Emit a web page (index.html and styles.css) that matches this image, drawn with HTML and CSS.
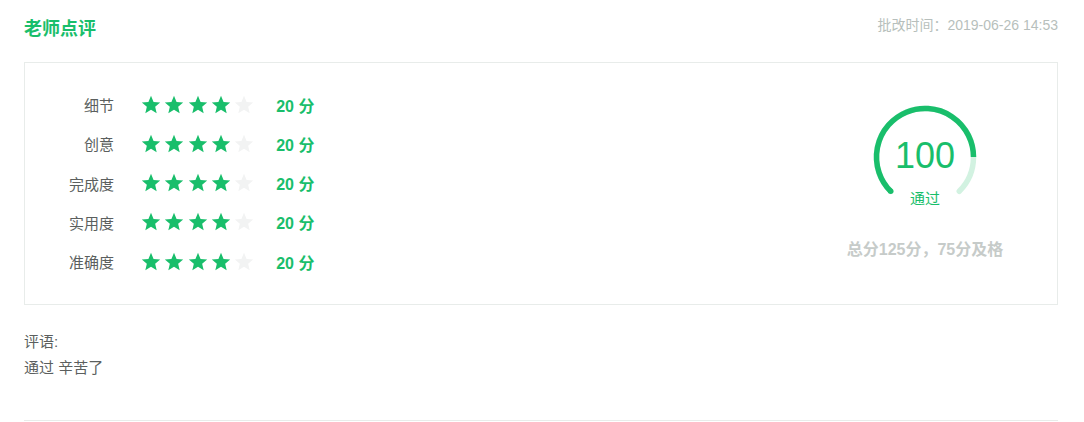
FILE: index.html
```html
<!DOCTYPE html>
<html lang="zh-CN">
<head>
<meta charset="utf-8">
<title>老师点评</title>
<link rel="stylesheet" href="styles.css">
</head>
<body>
<div class="page">
  <div class="header">
    <div class="title">老师点评</div>
    <div class="time">批改时间：2019-06-26 14:53</div>
  </div>

  <div class="panel">
    <div class="rows">
      <div class="row">
        <div class="label">细节</div>
        <div class="stars">
          <svg class="star on" viewBox="0 0 24 24"><path d="M12 17.27L18.18 21l-1.64-7.03L22 9.24l-7.19-.61L12 2 9.19 8.63 2 9.24l5.46 4.73L5.82 21z"/></svg>
          <svg class="star on" viewBox="0 0 24 24"><path d="M12 17.27L18.18 21l-1.64-7.03L22 9.24l-7.19-.61L12 2 9.19 8.63 2 9.24l5.46 4.73L5.82 21z"/></svg>
          <svg class="star on" viewBox="0 0 24 24"><path d="M12 17.27L18.18 21l-1.64-7.03L22 9.24l-7.19-.61L12 2 9.19 8.63 2 9.24l5.46 4.73L5.82 21z"/></svg>
          <svg class="star on" viewBox="0 0 24 24"><path d="M12 17.27L18.18 21l-1.64-7.03L22 9.24l-7.19-.61L12 2 9.19 8.63 2 9.24l5.46 4.73L5.82 21z"/></svg>
          <svg class="star off" viewBox="0 0 24 24"><path d="M12 17.27L18.18 21l-1.64-7.03L22 9.24l-7.19-.61L12 2 9.19 8.63 2 9.24l5.46 4.73L5.82 21z"/></svg>
        </div>
        <div class="score">20 分</div>
      </div>
      <div class="row">
        <div class="label">创意</div>
        <div class="stars">
          <svg class="star on" viewBox="0 0 24 24"><path d="M12 17.27L18.18 21l-1.64-7.03L22 9.24l-7.19-.61L12 2 9.19 8.63 2 9.24l5.46 4.73L5.82 21z"/></svg>
          <svg class="star on" viewBox="0 0 24 24"><path d="M12 17.27L18.18 21l-1.64-7.03L22 9.24l-7.19-.61L12 2 9.19 8.63 2 9.24l5.46 4.73L5.82 21z"/></svg>
          <svg class="star on" viewBox="0 0 24 24"><path d="M12 17.27L18.18 21l-1.64-7.03L22 9.24l-7.19-.61L12 2 9.19 8.63 2 9.24l5.46 4.73L5.82 21z"/></svg>
          <svg class="star on" viewBox="0 0 24 24"><path d="M12 17.27L18.18 21l-1.64-7.03L22 9.24l-7.19-.61L12 2 9.19 8.63 2 9.24l5.46 4.73L5.82 21z"/></svg>
          <svg class="star off" viewBox="0 0 24 24"><path d="M12 17.27L18.18 21l-1.64-7.03L22 9.24l-7.19-.61L12 2 9.19 8.63 2 9.24l5.46 4.73L5.82 21z"/></svg>
        </div>
        <div class="score">20 分</div>
      </div>
      <div class="row">
        <div class="label">完成度</div>
        <div class="stars">
          <svg class="star on" viewBox="0 0 24 24"><path d="M12 17.27L18.18 21l-1.64-7.03L22 9.24l-7.19-.61L12 2 9.19 8.63 2 9.24l5.46 4.73L5.82 21z"/></svg>
          <svg class="star on" viewBox="0 0 24 24"><path d="M12 17.27L18.18 21l-1.64-7.03L22 9.24l-7.19-.61L12 2 9.19 8.63 2 9.24l5.46 4.73L5.82 21z"/></svg>
          <svg class="star on" viewBox="0 0 24 24"><path d="M12 17.27L18.18 21l-1.64-7.03L22 9.24l-7.19-.61L12 2 9.19 8.63 2 9.24l5.46 4.73L5.82 21z"/></svg>
          <svg class="star on" viewBox="0 0 24 24"><path d="M12 17.27L18.18 21l-1.64-7.03L22 9.24l-7.19-.61L12 2 9.19 8.63 2 9.24l5.46 4.73L5.82 21z"/></svg>
          <svg class="star off" viewBox="0 0 24 24"><path d="M12 17.27L18.18 21l-1.64-7.03L22 9.24l-7.19-.61L12 2 9.19 8.63 2 9.24l5.46 4.73L5.82 21z"/></svg>
        </div>
        <div class="score">20 分</div>
      </div>
      <div class="row">
        <div class="label">实用度</div>
        <div class="stars">
          <svg class="star on" viewBox="0 0 24 24"><path d="M12 17.27L18.18 21l-1.64-7.03L22 9.24l-7.19-.61L12 2 9.19 8.63 2 9.24l5.46 4.73L5.82 21z"/></svg>
          <svg class="star on" viewBox="0 0 24 24"><path d="M12 17.27L18.18 21l-1.64-7.03L22 9.24l-7.19-.61L12 2 9.19 8.63 2 9.24l5.46 4.73L5.82 21z"/></svg>
          <svg class="star on" viewBox="0 0 24 24"><path d="M12 17.27L18.18 21l-1.64-7.03L22 9.24l-7.19-.61L12 2 9.19 8.63 2 9.24l5.46 4.73L5.82 21z"/></svg>
          <svg class="star on" viewBox="0 0 24 24"><path d="M12 17.27L18.18 21l-1.64-7.03L22 9.24l-7.19-.61L12 2 9.19 8.63 2 9.24l5.46 4.73L5.82 21z"/></svg>
          <svg class="star off" viewBox="0 0 24 24"><path d="M12 17.27L18.18 21l-1.64-7.03L22 9.24l-7.19-.61L12 2 9.19 8.63 2 9.24l5.46 4.73L5.82 21z"/></svg>
        </div>
        <div class="score">20 分</div>
      </div>
      <div class="row">
        <div class="label">准确度</div>
        <div class="stars">
          <svg class="star on" viewBox="0 0 24 24"><path d="M12 17.27L18.18 21l-1.64-7.03L22 9.24l-7.19-.61L12 2 9.19 8.63 2 9.24l5.46 4.73L5.82 21z"/></svg>
          <svg class="star on" viewBox="0 0 24 24"><path d="M12 17.27L18.18 21l-1.64-7.03L22 9.24l-7.19-.61L12 2 9.19 8.63 2 9.24l5.46 4.73L5.82 21z"/></svg>
          <svg class="star on" viewBox="0 0 24 24"><path d="M12 17.27L18.18 21l-1.64-7.03L22 9.24l-7.19-.61L12 2 9.19 8.63 2 9.24l5.46 4.73L5.82 21z"/></svg>
          <svg class="star on" viewBox="0 0 24 24"><path d="M12 17.27L18.18 21l-1.64-7.03L22 9.24l-7.19-.61L12 2 9.19 8.63 2 9.24l5.46 4.73L5.82 21z"/></svg>
          <svg class="star off" viewBox="0 0 24 24"><path d="M12 17.27L18.18 21l-1.64-7.03L22 9.24l-7.19-.61L12 2 9.19 8.63 2 9.24l5.46 4.73L5.82 21z"/></svg>
        </div>
        <div class="score">20 分</div>
      </div>
    </div>

    <div class="total">
      <div class="gauge">
        <svg class="gauge-ring" viewBox="0 0 110 110">
          <path class="ring-bg" d="M20.71 89.29 A48.5 48.5 0 1 1 89.29 89.29"/>
          <path class="ring-fg" d="M20.71 89.29 A48.5 48.5 0 1 1 103.5 55"/>
          <circle class="ring-cap" cx="20.71" cy="89.29" r="2.75"/>
        </svg>
        <div class="gauge-num">100</div>
        <div class="gauge-status">通过</div>
      </div>
      <div class="total-note">总分125分，75分及格</div>
    </div>
  </div>

  <div class="comment">
    <div class="comment-line">评语:</div>
    <div class="comment-line">通过 辛苦了</div>
  </div>

  <div class="divider"></div>
</div>
</body>
</html>
```

FILE: styles.css
```css
* {
  box-sizing: border-box;
}

html, body {
  margin: 0;
  padding: 0;
  background: #ffffff;
}

body {
  font-family: "Liberation Sans", "Noto Sans CJK SC", sans-serif;
  color: #5b5f5e;
}

.page {
  width: 1034px;
  margin-left: 24px;
}

.header {
  display: flex;
  justify-content: space-between;
  align-items: flex-start;
  padding-top: 17px;
  height: 62px;
}

.title {
  font-size: 18px;
  line-height: 24px;
  font-weight: bold;
  color: #19be6b;
}

.time {
  font-size: 14px;
  line-height: 17px;
  color: #b7bfbc;
}

.panel {
  display: flex;
  justify-content: space-between;
  height: 243px;
  border: 1px solid #e8ecea;
}

.rows {
  display: flex;
  flex-direction: column;
  justify-content: center;
  padding-bottom: 1px;
}

.row {
  display: flex;
  align-items: center;
  height: 39.25px;
}

.label {
  width: 89px;
  text-align: right;
  font-size: 15px;
  color: #5b5f5e;
}

.stars {
  display: flex;
  gap: 1.3px;
  margin-left: 26px;
}

.star {
  width: 22px;
  height: 22px;
  display: block;
}

.star.on path {
  fill: #19be6b;
}

.star.off path {
  fill: #f2f3f3;
}

.score {
  margin-left: 21px;
  font-size: 16px;
  font-weight: bold;
  color: #19be6b;
}

.total {
  width: 200px;
  margin-right: 32px;
  display: flex;
  flex-direction: column;
  align-items: center;
  padding-top: 39px;
}

.gauge {
  position: relative;
  width: 110px;
  height: 110px;
}

.gauge-ring {
  width: 110px;
  height: 110px;
  display: block;
}

.ring-bg {
  fill: none;
  stroke: #d2f2e1;
  stroke-width: 5.5;
  stroke-linecap: round;
}

.ring-fg {
  fill: none;
  stroke: #19be6b;
  stroke-width: 5.5;
  stroke-linecap: butt;
}

.ring-cap {
  fill: #19be6b;
}

.gauge-num {
  position: absolute;
  left: 0;
  right: 0;
  top: 34px;
  text-align: center;
  font-size: 36px;
  line-height: 40px;
  color: #19be6b;
}

.gauge-status {
  position: absolute;
  left: 0;
  right: 0;
  top: 87px;
  text-align: center;
  font-size: 15px;
  line-height: 20px;
  color: #19be6b;
}

.total-note {
  margin-top: 27px;
  font-size: 16px;
  line-height: 22px;
  font-weight: bold;
  color: #c6cbc9;
}

.comment {
  padding-top: 24px;
}

.comment-line {
  font-size: 15px;
  line-height: 26px;
  color: #5b5f5e;
}

.divider {
  margin-top: 39px;
  border-top: 1px solid #e8ecea;
}
```
